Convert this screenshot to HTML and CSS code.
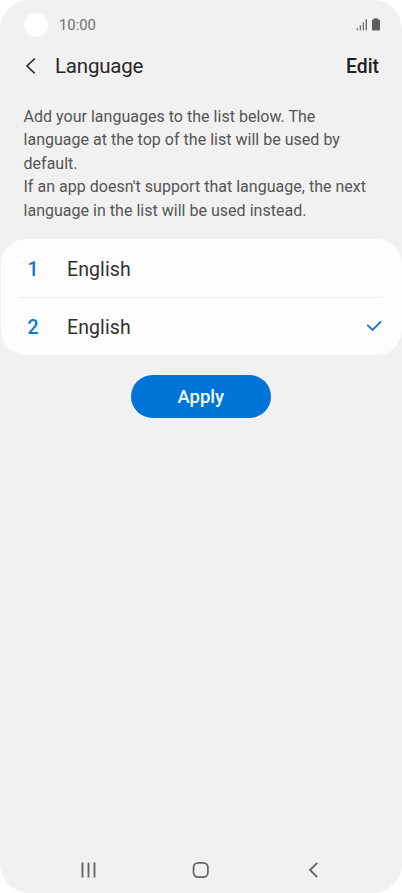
FILE: index.html
```html
<!DOCTYPE html>
<html lang="en">
<head>
<meta charset="utf-8">
<meta name="viewport" content="width=device-width">
<title>Language</title>
<link rel="stylesheet" href="styles.css">
</head>
<body>
<div class="phone">
  <header class="status">
    <span class="camera"></span>
    <span class="clock">10:00</span>
    <svg class="indicators" width="26" height="14" viewBox="0 0 26 14" fill="#5e5e5e">
      <path fill="#6c6c6c" d="M.7 10.300H2V12.300H.7zM3.700 7.300H5V12.300H3.700zM6.700 4.300H8V12.300H6.700zM9.600 1.200H11V12.300H9.600z"/>
      <path d="M17.800.2h3.800v1.200h1.500q.9 0 .9.900v9.300q0 .9-.9.900h-6.200q-.9 0-.9-.9V2.300q0-.9.9-.9h.9z"/>
    </svg>
  </header>
  <div class="titlebar">
    <svg class="back" width="12" height="18" viewBox="0 0 12 18" fill="none" stroke="#303030" stroke-width="1.700"><path d="M10.800 1.700 3 9l7.800 7.300"/></svg>
    <h1 class="title">Language</h1>
    <span class="edit">Edit</span>
  </div>
  <p class="intro">Add your languages to the list below. The<br>language at the top of the list will be used by<br>default.<br>If an app doesn't support that language, the next<br>language in the list will be used instead.</p>
  <ol class="list">
    <li class="row"><span class="num">1</span><span class="name">English</span></li>
    <li class="row">
      <span class="num">2</span><span class="name">English</span>
      <svg class="check" width="18" height="14" viewBox="0 0 18 14" fill="none" stroke="#1674cf" stroke-width="1.900"><path d="m2.300 5.900 5.300 5 8.500-8.500"/></svg>
    </li>
  </ol>
  <button class="apply">Apply</button>
  <nav class="nav">
    <svg width="20" height="18" viewBox="0 0 20 18" fill="none" stroke="#666" stroke-width="1.900"><path d="M4.500 1.500v15M10.500 1.500v15M16.500 1.500v15"/></svg>
    <svg width="20" height="18" viewBox="0 0 20 18" fill="none" stroke="#626262" stroke-width="1.700"><rect x="2.500" y="1.800" width="14.400" height="14.400" rx="4.700"/></svg>
    <svg width="20" height="18" viewBox="0 0 20 18" fill="none" stroke="#626262" stroke-width="1.800"><path d="m14.200 1.900-7.200 7.100 7.200 7.200"/></svg>
  </nav>
</div>
</body>
</html>
```
FILE: styles.css
```css
* { box-sizing: border-box; }
body {
  margin: 0;
  background: #fff;
  font-family: Roboto, "Liberation Sans", sans-serif;
}
.phone {
  width: 402px;
  height: 893px;
  display: flex;
  flex-direction: column;
  background: #f1f1f1;
  border-radius: 29px;
  overflow: hidden;
}
.status {
  height: 50px;
  padding: 0 20px 0 24px;
  display: flex;
  align-items: center;
}
.camera {
  width: 24px;
  height: 24px;
  border-radius: 50%;
  background: #fff;
}
.clock {
  margin-left: 11px;
  font-size: 14.800px;
  color: #707070;
}
.indicators { margin-left: auto; }
.titlebar {
  height: 31px;
  padding: 0 23px 0 24px;
  display: flex;
  align-items: center;
}
.title {
  margin: 0 0 0 19px;
  font-size: 20.500px;
  letter-spacing: -0.200px;
  font-weight: 400;
  color: #282828;
}
.edit {
  margin-left: auto;
  padding-top: 2px;
  font-size: 19.300px;
  font-weight: 500;
  color: #202020;
}
.intro {
  height: 117px;
  margin: 24px 0 17.400px 23.500px;
  font-size: 16px;
  letter-spacing: 0.020px;
  line-height: 23.400px;
  white-space: nowrap;
  color: #555;
}
.list {
  height: 116px;
  margin: 0 0.500px;
  padding: 0 18.500px;
  list-style: none;
  border-radius: 25px;
  background: #fdfdfd;
}
.row {
  height: 58px;
  display: flex;
  align-items: center;
}
.row:first-child { height: 57.600px; }
.row + .row { border-top: 1px solid #ececec; }
.num,
.name {
  padding-top: 3px;
  font-size: 19.500px;
}
.num {
  width: 28px;
  text-align: center;
  font-weight: 500;
  color: #1476d0;
}
.name {
  margin-left: 20px;
  letter-spacing: 0.100px;
  color: #303030;
}
.check {
  margin-left: auto;
  margin-bottom: 1px;
}
.apply {
  width: 140.500px;
  height: 43px;
  margin: 19.300px 0 0 130.500px;
  padding: 1px 0 0;
  border: 0;
  border-radius: 22px;
  background: #0075d7;
  color: #f4fbff;
  font: 500 18.500px Roboto, sans-serif;
}
.nav {
  margin: auto 0 14px;
  padding: 0 79px 0 78px;
  display: flex;
  justify-content: space-between;
}
```
